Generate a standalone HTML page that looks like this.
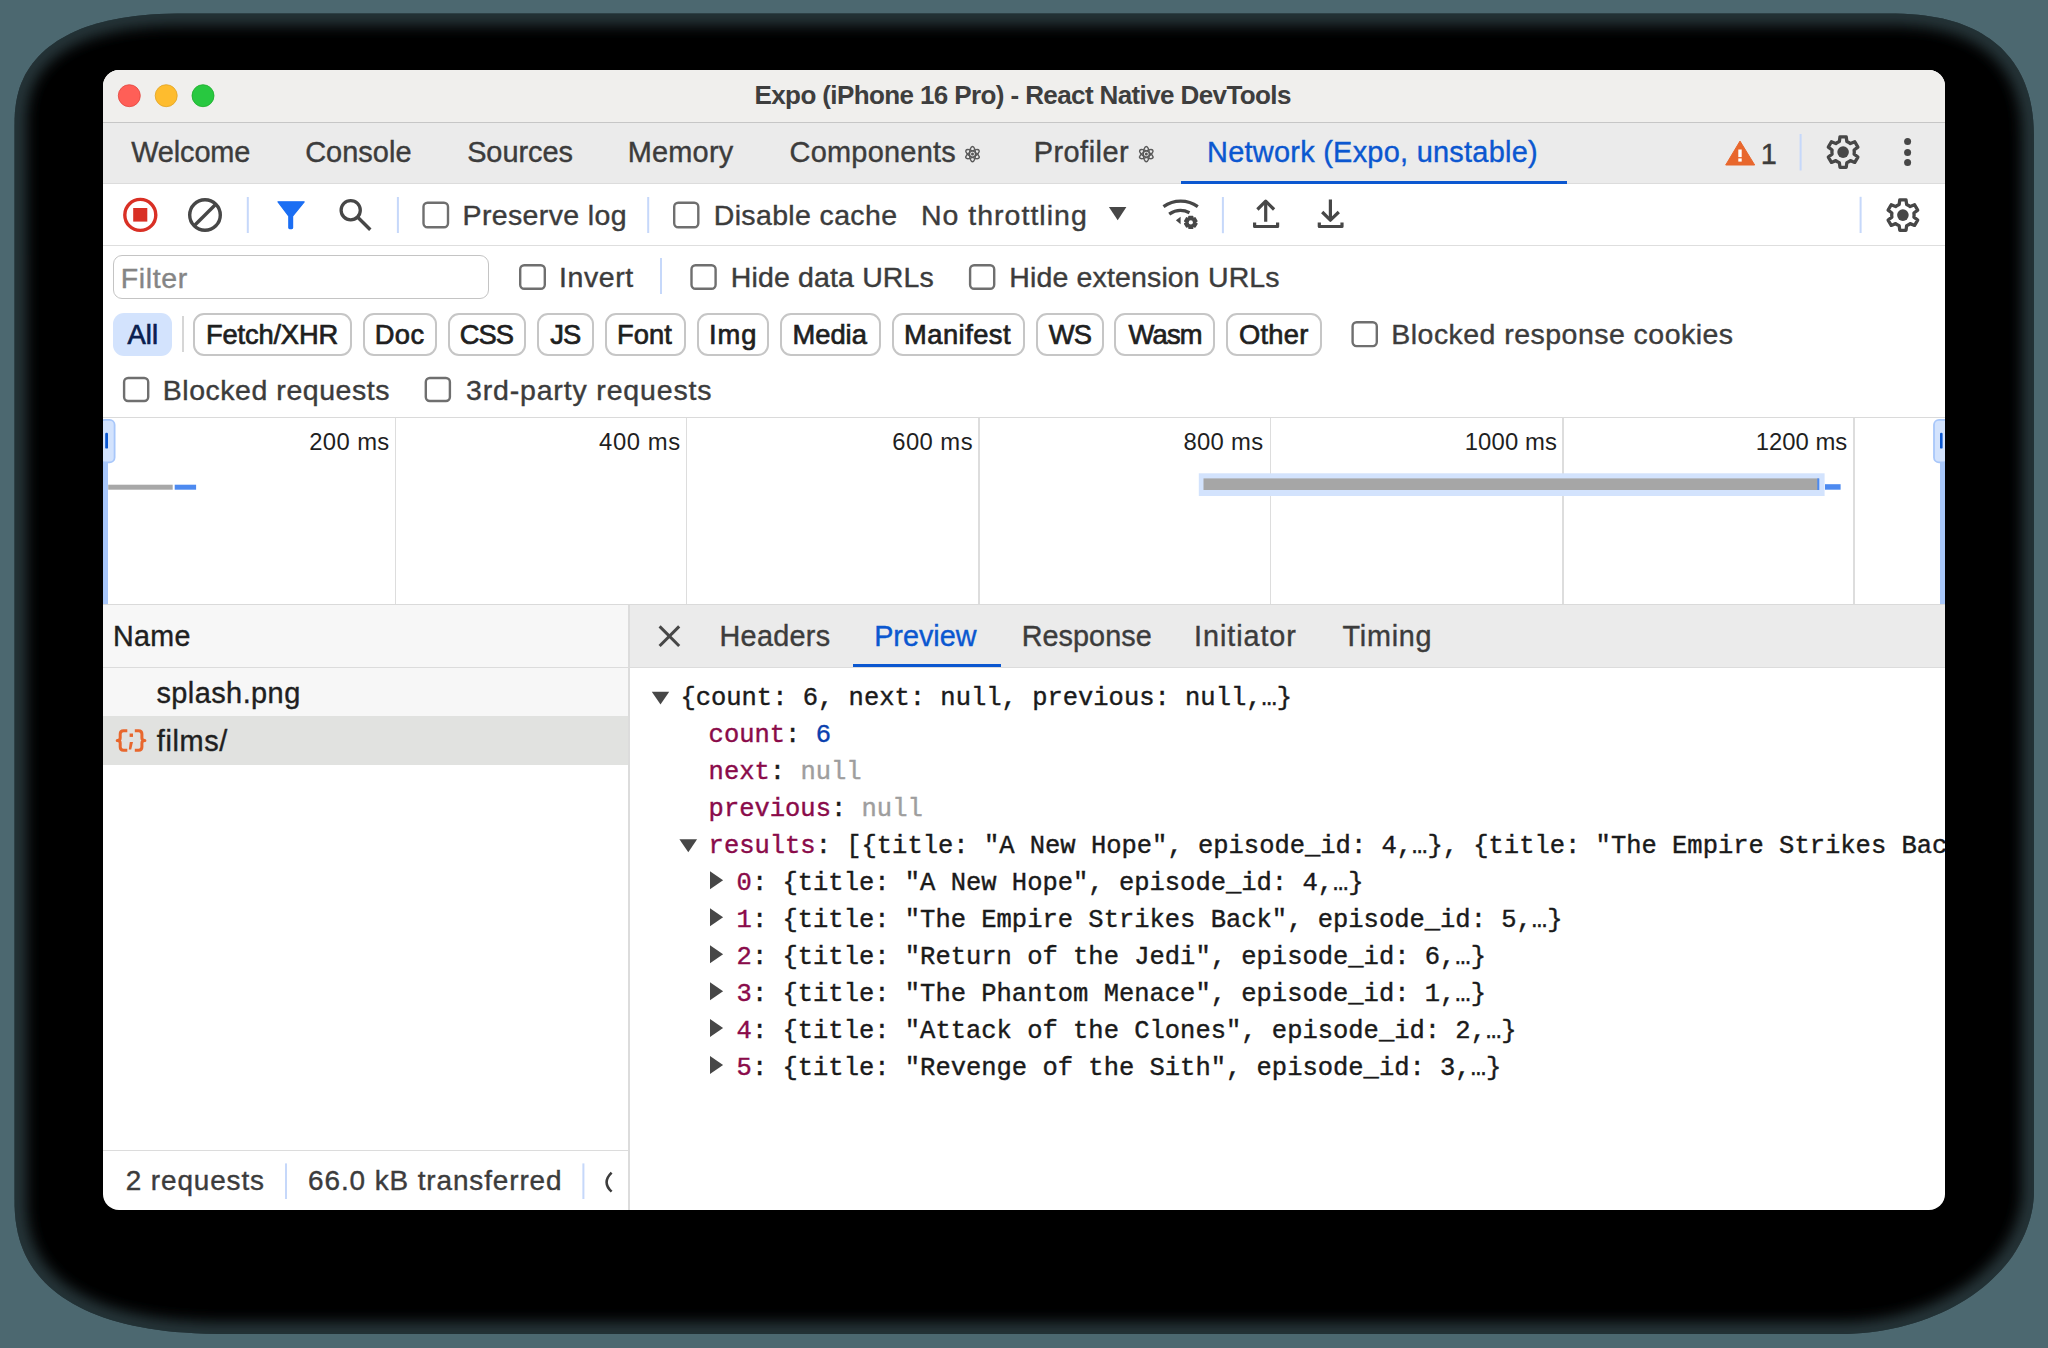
<!DOCTYPE html>
<html><head><meta charset="utf-8">
<style>
html,body{margin:0;padding:0;width:2048px;height:1348px;overflow:hidden;background:#4c6870;}
.abs{position:absolute;}
#shadow{position:absolute;left:14.5px;top:13.5px;width:2019.5px;height:1320.5px;border-radius:125px 130px 190px 170px / 115px 125px 135px 125px;background:#000;box-shadow:inset 0 0 22px 0 rgba(76,104,112,0.55);}
#win{position:absolute;left:103px;top:70px;width:1842px;height:1140px;border-radius:16px;overflow:hidden;background:#fff;}
#c{position:absolute;left:-103px;top:-70px;width:2048px;height:1348px;}
.r{position:absolute;}
.t{position:absolute;white-space:nowrap;-webkit-text-stroke:0.4px currentColor;}
.nb{-webkit-text-stroke:0;}
.t.ct{-webkit-text-stroke:0.7px currentColor;}
.m{position:absolute;white-space:nowrap;-webkit-text-stroke:0.4px currentColor;font:25.496px "Liberation Mono",monospace;}
.chip{position:absolute;top:312.5px;height:43.5px;box-sizing:border-box;border:2px solid #c6c6c6;border-radius:11px;}
.chip.sel{border:none;background:#d3e3fd;}
svg{position:absolute;left:0;top:0;}
</style></head><body>
<svg id="shsvg" width="2048" height="1348" style="position:absolute;left:0;top:0"><defs><clipPath id="shclip"><path d="M14.5,127.5 L14.6,118.9 L14.9,112.6 L15.5,106.9 L16.2,101.7 L17.2,96.7 L18.4,91.9 L19.8,87.3 L21.4,82.9 L23.3,78.7 L25.3,74.6 L27.6,70.7 L30.0,66.9 L32.7,63.2 L35.6,59.7 L38.7,56.3 L41.9,53.0 L45.4,49.8 L49.1,46.8 L53.0,43.9 L57.1,41.1 L61.4,38.5 L65.9,35.9 L70.6,33.5 L75.4,31.3 L80.5,29.1 L85.8,27.1 L91.3,25.3 L96.9,23.6 L102.8,22.0 L108.9,20.5 L115.2,19.2 L121.7,18.0 L128.5,16.9 L135.5,16.0 L142.9,15.3 L150.6,14.6 L158.8,14.1 L167.5,13.8 L177.3,13.6 L190.5,13.5 L1884.0,13.5 L1895.3,13.6 L1903.6,13.8 L1911.1,14.2 L1918.0,14.8 L1924.6,15.5 L1930.8,16.4 L1936.8,17.4 L1942.6,18.6 L1948.2,20.0 L1953.6,21.5 L1958.7,23.1 L1963.7,25.0 L1968.6,26.9 L1973.2,29.1 L1977.7,31.3 L1982.1,33.8 L1986.2,36.4 L1990.2,39.1 L1994.0,42.0 L1997.7,45.0 L2001.2,48.1 L2004.5,51.5 L2007.6,54.9 L2010.6,58.5 L2013.4,62.3 L2016.0,66.2 L2018.5,70.2 L2020.8,74.4 L2022.9,78.7 L2024.8,83.2 L2026.5,87.9 L2028.1,92.7 L2029.5,97.7 L2030.7,102.9 L2031.7,108.3 L2032.5,114.0 L2033.2,120.1 L2033.6,126.5 L2033.9,133.7 L2034.0,143.5 L2034.0,1190.0 L2033.9,1195.7 L2033.4,1201.3 L2032.7,1206.9 L2031.6,1212.5 L2030.3,1218.1 L2028.6,1223.6 L2026.7,1229.1 L2024.5,1234.5 L2022.0,1239.8 L2019.2,1245.1 L2016.2,1250.3 L2012.9,1255.4 L2009.3,1260.4 L2005.4,1265.2 L2001.3,1270.0 L1996.9,1274.6 L1992.4,1279.1 L1987.5,1283.5 L1982.5,1287.7 L1977.2,1291.8 L1971.7,1295.7 L1966.0,1299.5 L1960.1,1303.1 L1954.0,1306.5 L1947.8,1309.7 L1941.4,1312.8 L1934.8,1315.6 L1928.1,1318.3 L1921.2,1320.8 L1914.2,1323.0 L1907.1,1325.1 L1899.9,1327.0 L1892.7,1328.6 L1885.3,1330.0 L1877.8,1331.2 L1870.3,1332.2 L1862.8,1333.0 L1855.2,1333.6 L1847.6,1333.9 L1840.0,1334.0 L234.5,1334.0 L218.0,1333.9 L205.8,1333.7 L194.8,1333.2 L184.6,1332.6 L175.0,1331.9 L165.8,1330.9 L157.0,1329.8 L148.5,1328.6 L140.4,1327.1 L132.5,1325.5 L124.9,1323.8 L117.5,1321.8 L110.4,1319.7 L103.6,1317.5 L97.0,1315.1 L90.7,1312.5 L84.6,1309.7 L78.7,1306.8 L73.1,1303.8 L67.8,1300.6 L62.7,1297.2 L57.8,1293.7 L53.2,1290.0 L48.8,1286.2 L44.7,1282.2 L40.8,1278.1 L37.2,1273.8 L33.9,1269.4 L30.8,1264.8 L28.0,1260.0 L25.4,1255.1 L23.2,1249.9 L21.1,1244.6 L19.4,1239.1 L17.9,1233.3 L16.7,1227.3 L15.7,1220.9 L15.0,1214.0 L14.6,1206.4 L14.5,1196.0 Z"/></clipPath><filter id="shblur" x="-5%" y="-5%" width="110%" height="110%"><feGaussianBlur stdDeviation="7"/></filter></defs><path d="M14.5,127.5 L14.6,118.9 L14.9,112.6 L15.5,106.9 L16.2,101.7 L17.2,96.7 L18.4,91.9 L19.8,87.3 L21.4,82.9 L23.3,78.7 L25.3,74.6 L27.6,70.7 L30.0,66.9 L32.7,63.2 L35.6,59.7 L38.7,56.3 L41.9,53.0 L45.4,49.8 L49.1,46.8 L53.0,43.9 L57.1,41.1 L61.4,38.5 L65.9,35.9 L70.6,33.5 L75.4,31.3 L80.5,29.1 L85.8,27.1 L91.3,25.3 L96.9,23.6 L102.8,22.0 L108.9,20.5 L115.2,19.2 L121.7,18.0 L128.5,16.9 L135.5,16.0 L142.9,15.3 L150.6,14.6 L158.8,14.1 L167.5,13.8 L177.3,13.6 L190.5,13.5 L1884.0,13.5 L1895.3,13.6 L1903.6,13.8 L1911.1,14.2 L1918.0,14.8 L1924.6,15.5 L1930.8,16.4 L1936.8,17.4 L1942.6,18.6 L1948.2,20.0 L1953.6,21.5 L1958.7,23.1 L1963.7,25.0 L1968.6,26.9 L1973.2,29.1 L1977.7,31.3 L1982.1,33.8 L1986.2,36.4 L1990.2,39.1 L1994.0,42.0 L1997.7,45.0 L2001.2,48.1 L2004.5,51.5 L2007.6,54.9 L2010.6,58.5 L2013.4,62.3 L2016.0,66.2 L2018.5,70.2 L2020.8,74.4 L2022.9,78.7 L2024.8,83.2 L2026.5,87.9 L2028.1,92.7 L2029.5,97.7 L2030.7,102.9 L2031.7,108.3 L2032.5,114.0 L2033.2,120.1 L2033.6,126.5 L2033.9,133.7 L2034.0,143.5 L2034.0,1190.0 L2033.9,1195.7 L2033.4,1201.3 L2032.7,1206.9 L2031.6,1212.5 L2030.3,1218.1 L2028.6,1223.6 L2026.7,1229.1 L2024.5,1234.5 L2022.0,1239.8 L2019.2,1245.1 L2016.2,1250.3 L2012.9,1255.4 L2009.3,1260.4 L2005.4,1265.2 L2001.3,1270.0 L1996.9,1274.6 L1992.4,1279.1 L1987.5,1283.5 L1982.5,1287.7 L1977.2,1291.8 L1971.7,1295.7 L1966.0,1299.5 L1960.1,1303.1 L1954.0,1306.5 L1947.8,1309.7 L1941.4,1312.8 L1934.8,1315.6 L1928.1,1318.3 L1921.2,1320.8 L1914.2,1323.0 L1907.1,1325.1 L1899.9,1327.0 L1892.7,1328.6 L1885.3,1330.0 L1877.8,1331.2 L1870.3,1332.2 L1862.8,1333.0 L1855.2,1333.6 L1847.6,1333.9 L1840.0,1334.0 L234.5,1334.0 L218.0,1333.9 L205.8,1333.7 L194.8,1333.2 L184.6,1332.6 L175.0,1331.9 L165.8,1330.9 L157.0,1329.8 L148.5,1328.6 L140.4,1327.1 L132.5,1325.5 L124.9,1323.8 L117.5,1321.8 L110.4,1319.7 L103.6,1317.5 L97.0,1315.1 L90.7,1312.5 L84.6,1309.7 L78.7,1306.8 L73.1,1303.8 L67.8,1300.6 L62.7,1297.2 L57.8,1293.7 L53.2,1290.0 L48.8,1286.2 L44.7,1282.2 L40.8,1278.1 L37.2,1273.8 L33.9,1269.4 L30.8,1264.8 L28.0,1260.0 L25.4,1255.1 L23.2,1249.9 L21.1,1244.6 L19.4,1239.1 L17.9,1233.3 L16.7,1227.3 L15.7,1220.9 L15.0,1214.0 L14.6,1206.4 L14.5,1196.0 Z" fill="#000"/><g clip-path="url(#shclip)"><path d="M14.5,127.5 L14.6,118.9 L14.9,112.6 L15.5,106.9 L16.2,101.7 L17.2,96.7 L18.4,91.9 L19.8,87.3 L21.4,82.9 L23.3,78.7 L25.3,74.6 L27.6,70.7 L30.0,66.9 L32.7,63.2 L35.6,59.7 L38.7,56.3 L41.9,53.0 L45.4,49.8 L49.1,46.8 L53.0,43.9 L57.1,41.1 L61.4,38.5 L65.9,35.9 L70.6,33.5 L75.4,31.3 L80.5,29.1 L85.8,27.1 L91.3,25.3 L96.9,23.6 L102.8,22.0 L108.9,20.5 L115.2,19.2 L121.7,18.0 L128.5,16.9 L135.5,16.0 L142.9,15.3 L150.6,14.6 L158.8,14.1 L167.5,13.8 L177.3,13.6 L190.5,13.5 L1884.0,13.5 L1895.3,13.6 L1903.6,13.8 L1911.1,14.2 L1918.0,14.8 L1924.6,15.5 L1930.8,16.4 L1936.8,17.4 L1942.6,18.6 L1948.2,20.0 L1953.6,21.5 L1958.7,23.1 L1963.7,25.0 L1968.6,26.9 L1973.2,29.1 L1977.7,31.3 L1982.1,33.8 L1986.2,36.4 L1990.2,39.1 L1994.0,42.0 L1997.7,45.0 L2001.2,48.1 L2004.5,51.5 L2007.6,54.9 L2010.6,58.5 L2013.4,62.3 L2016.0,66.2 L2018.5,70.2 L2020.8,74.4 L2022.9,78.7 L2024.8,83.2 L2026.5,87.9 L2028.1,92.7 L2029.5,97.7 L2030.7,102.9 L2031.7,108.3 L2032.5,114.0 L2033.2,120.1 L2033.6,126.5 L2033.9,133.7 L2034.0,143.5 L2034.0,1190.0 L2033.9,1195.7 L2033.4,1201.3 L2032.7,1206.9 L2031.6,1212.5 L2030.3,1218.1 L2028.6,1223.6 L2026.7,1229.1 L2024.5,1234.5 L2022.0,1239.8 L2019.2,1245.1 L2016.2,1250.3 L2012.9,1255.4 L2009.3,1260.4 L2005.4,1265.2 L2001.3,1270.0 L1996.9,1274.6 L1992.4,1279.1 L1987.5,1283.5 L1982.5,1287.7 L1977.2,1291.8 L1971.7,1295.7 L1966.0,1299.5 L1960.1,1303.1 L1954.0,1306.5 L1947.8,1309.7 L1941.4,1312.8 L1934.8,1315.6 L1928.1,1318.3 L1921.2,1320.8 L1914.2,1323.0 L1907.1,1325.1 L1899.9,1327.0 L1892.7,1328.6 L1885.3,1330.0 L1877.8,1331.2 L1870.3,1332.2 L1862.8,1333.0 L1855.2,1333.6 L1847.6,1333.9 L1840.0,1334.0 L234.5,1334.0 L218.0,1333.9 L205.8,1333.7 L194.8,1333.2 L184.6,1332.6 L175.0,1331.9 L165.8,1330.9 L157.0,1329.8 L148.5,1328.6 L140.4,1327.1 L132.5,1325.5 L124.9,1323.8 L117.5,1321.8 L110.4,1319.7 L103.6,1317.5 L97.0,1315.1 L90.7,1312.5 L84.6,1309.7 L78.7,1306.8 L73.1,1303.8 L67.8,1300.6 L62.7,1297.2 L57.8,1293.7 L53.2,1290.0 L48.8,1286.2 L44.7,1282.2 L40.8,1278.1 L37.2,1273.8 L33.9,1269.4 L30.8,1264.8 L28.0,1260.0 L25.4,1255.1 L23.2,1249.9 L21.1,1244.6 L19.4,1239.1 L17.9,1233.3 L16.7,1227.3 L15.7,1220.9 L15.0,1214.0 L14.6,1206.4 L14.5,1196.0 Z" fill="none" stroke="#4c6870" stroke-opacity="0.5" stroke-width="24" filter="url(#shblur)"/></g></svg>
<div id="win"><div id="c">
<!-- backgrounds -->
<div class="r" style="left:103px;top:70px;width:1842px;height:52px;background:#f0efed"></div>
<div class="r" style="left:103px;top:122px;width:1842px;height:1px;background:#c6c6c6"></div>
<div class="r" style="left:103px;top:123px;width:1842px;height:60px;background:#ebebeb"></div>
<div class="r" style="left:103px;top:183px;width:1842px;height:1px;background:#dcdcdc"></div>
<div class="r" style="left:1181px;top:181px;width:386px;height:3px;background:#0b57d0"></div>
<div class="r" style="left:103px;top:245px;width:1842px;height:1px;background:#dedede"></div>
<div class="r" style="left:103px;top:417px;width:1842px;height:1px;background:#dadada"></div>
<div class="r" style="left:103px;top:604px;width:1842px;height:1px;background:#dadada"></div>
<div class="r" style="left:103px;top:605px;width:526px;height:62px;background:#f7f7f7"></div>
<div class="r" style="left:629px;top:605px;width:1316px;height:62px;background:#ebebeb"></div>
<div class="r" style="left:103px;top:667px;width:1842px;height:1px;background:#dcdcdc"></div>
<div class="r" style="left:103px;top:668px;width:526px;height:48px;background:#f7f7f7"></div>
<div class="r" style="left:103px;top:716px;width:526px;height:49px;background:#e1e2e0"></div>
<div class="r" style="left:628px;top:605px;width:1.5px;height:605px;background:#dcdcdc"></div>
<div class="r" style="left:103px;top:1150px;width:526px;height:1px;background:#dcdcdc"></div>
<div class="r" style="left:853px;top:664px;width:148px;height:3px;background:#0b57d0"></div>
<!-- timeline grid -->
<div class="r" style="left:394.5px;top:418px;width:1.5px;height:186px;background:#dddddd"></div>
<div class="r" style="left:685.5px;top:418px;width:1.5px;height:186px;background:#dddddd"></div>
<div class="r" style="left:978px;top:418px;width:1.5px;height:186px;background:#dddddd"></div>
<div class="r" style="left:1269.5px;top:418px;width:1.5px;height:186px;background:#dddddd"></div>
<div class="r" style="left:1562px;top:418px;width:1.5px;height:186px;background:#dddddd"></div>
<div class="r" style="left:1853px;top:418px;width:1.5px;height:186px;background:#dddddd"></div>
<!-- chips -->
<div class="chip sel" style="left:112.6px;width:59.20000000000002px"></div>
<div class="chip" style="left:193.2px;width:158.8px"></div>
<div class="chip" style="left:362.8px;width:74.19999999999999px"></div>
<div class="chip" style="left:447.8px;width:78.49999999999994px"></div>
<div class="chip" style="left:537.2px;width:56.5px"></div>
<div class="chip" style="left:604.5px;width:81.5px"></div>
<div class="chip" style="left:696.8px;width:72.20000000000005px"></div>
<div class="chip" style="left:779.9px;width:100.80000000000007px"></div>
<div class="chip" style="left:891.6px;width:133.30000000000007px"></div>
<div class="chip" style="left:1035.5px;width:68.0px"></div>
<div class="chip" style="left:1114px;width:101px"></div>
<div class="chip" style="left:1225.9px;width:96.29999999999995px"></div>
<div class="r" style="left:181.5px;top:316px;width:2px;height:36px;background:#d6d6d6"></div>
<!-- filter input -->
<div class="r" style="left:113px;top:254.5px;width:376px;height:44px;box-sizing:border-box;border:1.5px solid #c4c4c4;border-radius:9px"></div>
<svg width="2048" height="1348" viewBox="0 0 2048 1348">
<circle cx="129.3" cy="95.7" r="11" fill="#ff5f57" stroke="#e2463f" stroke-width="0.8"/>
<circle cx="166.2" cy="95.7" r="11" fill="#febc2e" stroke="#e1a325" stroke-width="0.8"/>
<circle cx="203" cy="95.7" r="11" fill="#28c840" stroke="#1dad2b" stroke-width="0.8"/>
<g fill="none" stroke="#5a5a5a" stroke-width="1.4"><ellipse cx="972.5" cy="154.1" rx="3.0" ry="7.6"/><ellipse cx="972.5" cy="154.1" rx="3.0" ry="7.6" transform="rotate(60 972.5 154.1)"/><ellipse cx="972.5" cy="154.1" rx="3.0" ry="7.6" transform="rotate(-60 972.5 154.1)"/></g><circle cx="972.5" cy="154.1" r="1.5" fill="#5a5a5a"/>
<g fill="none" stroke="#5a5a5a" stroke-width="1.4"><ellipse cx="1146.3" cy="154.1" rx="3.0" ry="7.6"/><ellipse cx="1146.3" cy="154.1" rx="3.0" ry="7.6" transform="rotate(60 1146.3 154.1)"/><ellipse cx="1146.3" cy="154.1" rx="3.0" ry="7.6" transform="rotate(-60 1146.3 154.1)"/></g><circle cx="1146.3" cy="154.1" r="1.5" fill="#5a5a5a"/>
<path d="M1740,141.1 L1754.7,165 L1725.7,165 Z" fill="#e8672d" stroke="#e8672d" stroke-width="1" stroke-linejoin="round"/>
<rect x="1738.3" y="149.5" width="3.4" height="7.6" fill="#fff"/><rect x="1738.3" y="158.4" width="3.4" height="3.2" fill="#fff"/>
<rect x="1799.60" y="134" width="2" height="36.5" fill="#c6d8fa"/>
<path d="M1837.50,142.40 L1839.36,141.54 L1840.00,136.81 L1846.20,136.81 L1846.84,141.54 L1848.70,142.40 L1850.38,143.59 L1854.79,141.77 L1857.89,147.14 L1854.11,150.06 L1854.30,152.10 L1854.11,154.14 L1857.89,157.06 L1854.79,162.43 L1850.38,160.61 L1848.70,161.80 L1846.84,162.66 L1846.20,167.39 L1840.00,167.39 L1839.36,162.66 L1837.50,161.80 L1835.82,160.61 L1831.41,162.43 L1828.31,157.06 L1832.09,154.14 L1831.90,152.10 L1832.09,150.06 L1828.31,147.14 L1831.41,141.77 L1835.82,143.59 Z" fill="none" stroke="#474747" stroke-width="3.3" stroke-linejoin="round"/><circle cx="1843.1" cy="152.1" r="5.8" fill="#474747"/>
<circle cx="1907.6" cy="141.6" r="3.5" fill="#474747"/>
<circle cx="1907.6" cy="152.4" r="3.5" fill="#474747"/>
<circle cx="1907.6" cy="162.6" r="3.5" fill="#474747"/>
<circle cx="140.3" cy="214.9" r="15.5" fill="none" stroke="#d93025" stroke-width="3.4"/>
<rect x="133.2" y="208" width="14.1" height="13.6" fill="#d93025"/>
<circle cx="205" cy="215" r="15.3" fill="none" stroke="#474747" stroke-width="3.4"/>
<line x1="215.8" y1="204.2" x2="194.2" y2="225.8" stroke="#474747" stroke-width="3.4"/>
<rect x="246.80" y="197" width="2" height="36" fill="#c6d8fa"/>
<path d="M278,201.8 L304.2,201.8 L292.6,216.2 L292.6,227.8 Q292.6,228.6 291.8,228.6 L289.6,228.6 Q288.8,228.6 288.8,227.8 L288.8,216.2 Z" fill="#1b6ef3" stroke="#1b6ef3" stroke-width="1.2" stroke-linejoin="round"/>
<circle cx="350.7" cy="210.2" r="9.6" fill="none" stroke="#474747" stroke-width="3.3"/>
<line x1="357.5" y1="217" x2="370.3" y2="229.8" stroke="#474747" stroke-width="3.4"/>
<rect x="396.90" y="197" width="2" height="36" fill="#c6d8fa"/>
<rect x="423.50" y="202.80" width="24.50" height="24.40" rx="4" fill="none" stroke="#6f6f6f" stroke-width="2.4"/>
<rect x="647.20" y="197" width="2" height="36" fill="#c6d8fa"/>
<rect x="674.20" y="202.80" width="24.10" height="24.40" rx="4" fill="none" stroke="#6f6f6f" stroke-width="2.4"/>
<path d="M1108.9,207.1 L1126.4,207.1 L1117.7,220.2 Z" fill="#474747"/>
<path d="M1163.5,206.6 A29.5,29.5 0 0 1 1197.8,206.6" fill="none" stroke="#474747" stroke-width="3.3"/>
<path d="M1169.2,214.2 A20,20 0 0 1 1189.5,212.7" fill="none" stroke="#474747" stroke-width="3.3"/>
<path d="M1175.9,220.2 L1180.6,216.8 L1180.6,224.3 Z" fill="#474747"/>
<path d="M1188.50,218.42 L1188.92,218.20 L1188.97,216.48 L1192.63,216.48 L1192.68,218.20 L1193.10,218.42 L1193.50,218.68 L1195.01,217.85 L1196.85,221.03 L1195.38,221.92 L1195.40,222.40 L1195.38,222.88 L1196.85,223.77 L1195.01,226.95 L1193.50,226.12 L1193.10,226.38 L1192.68,226.60 L1192.63,228.32 L1188.97,228.32 L1188.92,226.60 L1188.50,226.38 L1188.10,226.12 L1186.59,226.95 L1184.75,223.77 L1186.22,222.88 L1186.20,222.40 L1186.22,221.92 L1184.75,221.03 L1186.59,217.85 L1188.10,218.68 Z" fill="#474747" stroke="#474747" stroke-width="1.6" stroke-linejoin="round"/>
<circle cx="1190.8" cy="222.4" r="2.1" fill="#fff"/>
<rect x="1221.90" y="197" width="2" height="36.19999999999999" fill="#c6d8fa"/>
<g fill="none" stroke="#474747" stroke-width="3.2" stroke-linejoin="round"><line x1="1265.7" y1="202" x2="1265.7" y2="221.7"/><polyline points="1257.4,209.5 1265.7,201.2 1274.1,209.5"/><path d="M1254.6,222.4 L1254.6,226.5 L1277.6,226.5 L1277.6,222.4"/><line x1="1330.4" y1="199.5" x2="1330.4" y2="219"/><polyline points="1322.2,212 1330.4,220.2 1338.8,212"/><path d="M1319.3,222.4 L1319.3,226.5 L1342,226.5 L1342,222.4"/></g>
<rect x="1859.60" y="196.8" width="2" height="36.19999999999999" fill="#c6d8fa"/>
<path d="M1897.30,205.40 L1899.16,204.54 L1899.80,199.81 L1906.00,199.81 L1906.64,204.54 L1908.50,205.40 L1910.18,206.59 L1914.59,204.77 L1917.69,210.14 L1913.91,213.06 L1914.10,215.10 L1913.91,217.14 L1917.69,220.06 L1914.59,225.43 L1910.18,223.61 L1908.50,224.80 L1906.64,225.66 L1906.00,230.39 L1899.80,230.39 L1899.16,225.66 L1897.30,224.80 L1895.62,223.61 L1891.21,225.43 L1888.11,220.06 L1891.89,217.14 L1891.70,215.10 L1891.89,213.06 L1888.11,210.14 L1891.21,204.77 L1895.62,206.59 Z" fill="none" stroke="#474747" stroke-width="3.3" stroke-linejoin="round"/><circle cx="1902.9" cy="215.1" r="5.8" fill="#474747"/>
<rect x="520.20" y="265.20" width="24.60" height="23.60" rx="4" fill="none" stroke="#6f6f6f" stroke-width="2.4"/>
<rect x="660.00" y="258" width="2" height="36" fill="#c6d8fa"/>
<rect x="691.50" y="265.20" width="24.10" height="23.60" rx="4" fill="none" stroke="#6f6f6f" stroke-width="2.4"/>
<rect x="970.10" y="265.20" width="24.10" height="23.60" rx="4" fill="none" stroke="#6f6f6f" stroke-width="2.4"/>
<rect x="1352.60" y="322.20" width="24.20" height="23.90" rx="4" fill="none" stroke="#6f6f6f" stroke-width="2.4"/>
<rect x="124.10" y="378.00" width="24.10" height="23.00" rx="4" fill="none" stroke="#6f6f6f" stroke-width="2.4"/>
<rect x="425.80" y="378.00" width="24.10" height="23.00" rx="4" fill="none" stroke="#6f6f6f" stroke-width="2.4"/>
<rect x="100" y="419.8" width="14.6" height="42.6" rx="5" fill="#d3e3fd" stroke="#a8c7fa" stroke-width="1.8"/>
<rect x="103" y="462" width="5" height="142" fill="#a8c7fa"/>
<rect x="105.2" y="432.8" width="2.8" height="15.8" rx="1.2" fill="#0b57d0"/>
<rect x="1934" y="419.8" width="14.6" height="42.6" rx="5" fill="#d3e3fd" stroke="#a8c7fa" stroke-width="1.8"/>
<rect x="1940" y="462" width="5" height="142" fill="#a8c7fa"/>
<rect x="1940" y="432.8" width="2.6" height="15.8" rx="1.2" fill="#0b57d0"/>
<rect x="108.2" y="484.7" width="64.5" height="5" fill="#a8a8a8"/>
<rect x="174.7" y="484.7" width="21.4" height="5" fill="#4d8af0"/>
<rect x="1198.8" y="473.3" width="625.8" height="22.7" fill="#d3e3fd"/>
<rect x="1203.5" y="478.4" width="615.3" height="11.6" fill="#a6a6a6"/>
<rect x="1817.3" y="478.4" width="2" height="11.6" fill="#4d8af0"/>
<rect x="1825" y="484.2" width="15.6" height="5.5" fill="#4d8af0"/>
<g fill="none" stroke="#e8672d" stroke-width="3" stroke-linecap="butt" stroke-linejoin="round"><path d="M127.3,730.8 L123.5,730.8 Q120.2,730.8 120.2,734 L120.2,738 Q120.2,740.5 117.2,740.5 Q120.2,740.5 120.2,743 L120.2,747 Q120.2,750.2 123.5,750.2 L127.3,750.2"/><path d="M134.8,730.8 L138.6,730.8 Q141.9,730.8 141.9,734 L141.9,738 Q141.9,740.5 144.9,740.5 Q141.9,740.5 141.9,743 L141.9,747 Q141.9,750.2 138.6,750.2 L134.8,750.2"/></g>
<rect x="129.6" y="733.5" width="3.4" height="3.4" fill="#e8672d"/>
<path d="M129.8,742 L133,742 L131.2,749.5 L128.8,749.5 Z" fill="#e8672d"/>
<g stroke="#474747" stroke-width="3"><line x1="659.6" y1="626.4" x2="679.2" y2="646"/><line x1="679.2" y1="626.4" x2="659.6" y2="646"/></g>
<path d="M651.8,691.7 L669.2,691.7 L660.5,704.6 Z" fill="#474747"/>
<path d="M679.4,839.3 L697.1,839.3 L688.3,852.3 Z" fill="#474747"/>
<path d="M710,871.30 L723.1,880.30 L710,889.30 Z" fill="#474747"/>
<path d="M710,908.25 L723.1,917.25 L710,926.25 Z" fill="#474747"/>
<path d="M710,945.20 L723.1,954.20 L710,963.20 Z" fill="#474747"/>
<path d="M710,982.15 L723.1,991.15 L710,1000.15 Z" fill="#474747"/>
<path d="M710,1019.10 L723.1,1028.10 L710,1037.10 Z" fill="#474747"/>
<path d="M710,1056.05 L723.1,1065.05 L710,1074.05 Z" fill="#474747"/>
<path d="M611.6,1172.6 Q606.6,1177.5 606.6,1182.2 Q606.6,1187 611.6,1191.6" fill="none" stroke="#3c3c3c" stroke-width="2.6"/>
<rect x="285.00" y="1163.4" width="2" height="35.59999999999991" fill="#c6d8fa"/>
<rect x="582.40" y="1163.4" width="2" height="35.59999999999991" fill="#c6d8fa"/>
</svg>
<div class="t nb" style="left:754.54px;top:80.02px;font:bold 26.02px 'Liberation Sans', sans-serif;color:#3e3e3e;letter-spacing:-0.615px;">Expo (iPhone 16 Pro) - React Native DevTools</div>
<div class="t " style="left:131.25px;top:135.74px;font:normal 28.92px 'Liberation Sans', sans-serif;color:#3c3c3c;letter-spacing:-0.137px;">Welcome</div>
<div class="t " style="left:305.15px;top:135.74px;font:normal 28.92px 'Liberation Sans', sans-serif;color:#3c3c3c;letter-spacing:0.062px;">Console</div>
<div class="t " style="left:467.14px;top:135.74px;font:normal 28.92px 'Liberation Sans', sans-serif;color:#3c3c3c;letter-spacing:-0.031px;">Sources</div>
<div class="t " style="left:627.69px;top:135.74px;font:normal 28.92px 'Liberation Sans', sans-serif;color:#3c3c3c;letter-spacing:0.232px;">Memory</div>
<div class="t " style="left:789.55px;top:135.74px;font:normal 28.92px 'Liberation Sans', sans-serif;color:#3c3c3c;letter-spacing:0.257px;">Components</div>
<div class="t " style="left:1033.69px;top:135.74px;font:normal 28.92px 'Liberation Sans', sans-serif;color:#3c3c3c;letter-spacing:0.482px;">Profiler</div>
<div class="t " style="left:1206.99px;top:135.74px;font:normal 28.92px 'Liberation Sans', sans-serif;color:#0b57d0;letter-spacing:0.270px;">Network (Expo, unstable)</div>
<div class="t " style="left:1760.86px;top:137.74px;font:normal 28.92px 'Liberation Sans', sans-serif;color:#3c3c3c;letter-spacing:0.000px;">1</div>
<div class="t " style="left:462.52px;top:198.75px;font:normal 28.49px 'Liberation Sans', sans-serif;color:#3c3c3c;letter-spacing:0.377px;">Preserve log</div>
<div class="t " style="left:713.72px;top:198.75px;font:normal 28.49px 'Liberation Sans', sans-serif;color:#3c3c3c;letter-spacing:0.364px;">Disable cache</div>
<div class="t " style="left:920.92px;top:198.75px;font:normal 28.49px 'Liberation Sans', sans-serif;color:#3c3c3c;letter-spacing:1.023px;">No throttling</div>
<div class="t " style="left:120.72px;top:262.35px;font:normal 28.49px 'Liberation Sans', sans-serif;color:#858585;letter-spacing:0.649px;">Filter</div>
<div class="t " style="left:558.94px;top:260.75px;font:normal 28.49px 'Liberation Sans', sans-serif;color:#3c3c3c;letter-spacing:0.611px;">Invert</div>
<div class="t " style="left:730.72px;top:260.75px;font:normal 28.49px 'Liberation Sans', sans-serif;color:#3c3c3c;letter-spacing:0.156px;">Hide data URLs</div>
<div class="t " style="left:1009.32px;top:260.75px;font:normal 28.49px 'Liberation Sans', sans-serif;color:#3c3c3c;letter-spacing:0.151px;">Hide extension URLs</div>
<div class="t ct" style="left:127.40px;top:319.32px;font:normal 27.33px 'Liberation Sans', sans-serif;color:#0a1f4f;letter-spacing:0.216px;">All</div>
<div class="t ct" style="left:206.11px;top:319.32px;font:normal 27.33px 'Liberation Sans', sans-serif;color:#1f1f1f;letter-spacing:-0.198px;">Fetch/XHR</div>
<div class="t ct" style="left:374.71px;top:319.32px;font:normal 27.33px 'Liberation Sans', sans-serif;color:#1f1f1f;letter-spacing:0.419px;">Doc</div>
<div class="t ct" style="left:459.78px;top:319.32px;font:normal 27.33px 'Liberation Sans', sans-serif;color:#1f1f1f;letter-spacing:-1.000px;">CSS</div>
<div class="t ct" style="left:550.32px;top:319.32px;font:normal 27.33px 'Liberation Sans', sans-serif;color:#1f1f1f;letter-spacing:-1.000px;">JS</div>
<div class="t ct" style="left:617.01px;top:319.32px;font:normal 27.33px 'Liberation Sans', sans-serif;color:#1f1f1f;letter-spacing:0.050px;">Font</div>
<div class="t ct" style="left:709.04px;top:319.32px;font:normal 27.33px 'Liberation Sans', sans-serif;color:#1f1f1f;letter-spacing:0.921px;">Img</div>
<div class="t ct" style="left:792.41px;top:319.32px;font:normal 27.33px 'Liberation Sans', sans-serif;color:#1f1f1f;letter-spacing:0.014px;">Media</div>
<div class="t ct" style="left:904.11px;top:319.32px;font:normal 27.33px 'Liberation Sans', sans-serif;color:#1f1f1f;letter-spacing:0.451px;">Manifest</div>
<div class="t ct" style="left:1048.85px;top:319.32px;font:normal 27.33px 'Liberation Sans', sans-serif;color:#1f1f1f;letter-spacing:-1.000px;">WS</div>
<div class="t ct" style="left:1128.50px;top:319.32px;font:normal 27.33px 'Liberation Sans', sans-serif;color:#1f1f1f;letter-spacing:-0.759px;">Wasm</div>
<div class="t ct" style="left:1239.11px;top:319.32px;font:normal 27.33px 'Liberation Sans', sans-serif;color:#1f1f1f;letter-spacing:0.202px;">Other</div>
<div class="t " style="left:1391.32px;top:318.45px;font:normal 28.49px 'Liberation Sans', sans-serif;color:#3c3c3c;letter-spacing:0.468px;">Blocked response cookies</div>
<div class="t " style="left:162.72px;top:374.35px;font:normal 28.49px 'Liberation Sans', sans-serif;color:#3c3c3c;letter-spacing:0.547px;">Blocked requests</div>
<div class="t " style="left:465.95px;top:374.35px;font:normal 28.49px 'Liberation Sans', sans-serif;color:#3c3c3c;letter-spacing:0.849px;">3rd-party requests</div>
<div class="t nb" style="left:309.21px;top:428.03px;font:normal 23.84px 'Liberation Sans', sans-serif;color:#1f1f1f;letter-spacing:0.388px;">200 ms</div>
<div class="t nb" style="left:599.12px;top:428.03px;font:normal 23.84px 'Liberation Sans', sans-serif;color:#1f1f1f;letter-spacing:0.585px;">400 ms</div>
<div class="t nb" style="left:892.21px;top:428.03px;font:normal 23.84px 'Liberation Sans', sans-serif;color:#1f1f1f;letter-spacing:0.448px;">600 ms</div>
<div class="t nb" style="left:1183.45px;top:428.03px;font:normal 23.84px 'Liberation Sans', sans-serif;color:#1f1f1f;letter-spacing:0.320px;">800 ms</div>
<div class="t nb" style="left:1464.73px;top:428.03px;font:normal 23.84px 'Liberation Sans', sans-serif;color:#1f1f1f;letter-spacing:0.143px;">1000 ms</div>
<div class="t nb" style="left:1755.73px;top:428.03px;font:normal 23.84px 'Liberation Sans', sans-serif;color:#1f1f1f;letter-spacing:0.010px;">1200 ms</div>
<div class="t " style="left:112.91px;top:619.91px;font:normal 28.63px 'Liberation Sans', sans-serif;color:#1f1f1f;letter-spacing:0.382px;">Name</div>
<div class="t " style="left:156.42px;top:676.74px;font:normal 28.92px 'Liberation Sans', sans-serif;color:#1f1f1f;letter-spacing:0.444px;">splash.png</div>
<div class="t " style="left:156.71px;top:724.94px;font:normal 28.92px 'Liberation Sans', sans-serif;color:#1f1f1f;letter-spacing:0.649px;">films/</div>
<div class="t " style="left:719.50px;top:619.88px;font:normal 28.78px 'Liberation Sans', sans-serif;color:#3c3c3c;letter-spacing:0.314px;">Headers</div>
<div class="t " style="left:874.20px;top:619.88px;font:normal 28.78px 'Liberation Sans', sans-serif;color:#0b57d0;letter-spacing:-0.013px;">Preview</div>
<div class="t " style="left:1021.70px;top:619.88px;font:normal 28.78px 'Liberation Sans', sans-serif;color:#3c3c3c;letter-spacing:0.065px;">Response</div>
<div class="t " style="left:1194.11px;top:619.88px;font:normal 28.78px 'Liberation Sans', sans-serif;color:#3c3c3c;letter-spacing:0.924px;">Initiator</div>
<div class="t " style="left:1342.62px;top:619.88px;font:normal 28.78px 'Liberation Sans', sans-serif;color:#3c3c3c;letter-spacing:0.742px;">Timing</div>
<div class="t " style="left:125.80px;top:1165.48px;font:normal 27.91px 'Liberation Sans', sans-serif;color:#3c3c3c;letter-spacing:0.880px;">2 requests</div>
<div class="t " style="left:308.10px;top:1165.48px;font:normal 27.91px 'Liberation Sans', sans-serif;color:#3c3c3c;letter-spacing:0.896px;">66.0 kB transferred</div>
<div style="position:absolute;left:629px;top:668px;width:1316px;height:542px;overflow:hidden"><div style="position:absolute;left:-629px;top:-668px;width:2048px;height:1348px">
<div class="m" style="left:680.40px;top:684.05px"><span style="color:#1a1a1a">{count: 6, next: null, previous: null,…}</span></div>
<div class="m" style="left:708.60px;top:721.00px"><span style="color:#8a0b4a">count</span><span style="color:#1a1a1a">: </span><span style="color:#0a3fae">6</span></div>
<div class="m" style="left:708.60px;top:757.95px"><span style="color:#8a0b4a">next</span><span style="color:#1a1a1a">: </span><span style="color:#9e9e9e">null</span></div>
<div class="m" style="left:708.60px;top:794.90px"><span style="color:#8a0b4a">previous</span><span style="color:#1a1a1a">: </span><span style="color:#9e9e9e">null</span></div>
<div class="m" style="left:708.60px;top:831.85px"><span style="color:#8a0b4a">results</span><span style="color:#1a1a1a">: [{title: &quot;A New Hope&quot;, episode_id: 4,…}, {title: &quot;The Empire Strikes Back&quot;, episode_id: 5,…},…]</span></div>
<div class="m" style="left:736.60px;top:868.80px"><span style="color:#8a0b4a">0</span><span style="color:#1a1a1a">: {title: &quot;A New Hope&quot;, episode_id: 4,…}</span></div>
<div class="m" style="left:736.60px;top:905.75px"><span style="color:#8a0b4a">1</span><span style="color:#1a1a1a">: {title: &quot;The Empire Strikes Back&quot;, episode_id: 5,…}</span></div>
<div class="m" style="left:736.60px;top:942.70px"><span style="color:#8a0b4a">2</span><span style="color:#1a1a1a">: {title: &quot;Return of the Jedi&quot;, episode_id: 6,…}</span></div>
<div class="m" style="left:736.60px;top:979.65px"><span style="color:#8a0b4a">3</span><span style="color:#1a1a1a">: {title: &quot;The Phantom Menace&quot;, episode_id: 1,…}</span></div>
<div class="m" style="left:736.60px;top:1016.60px"><span style="color:#8a0b4a">4</span><span style="color:#1a1a1a">: {title: &quot;Attack of the Clones&quot;, episode_id: 2,…}</span></div>
<div class="m" style="left:736.60px;top:1053.55px"><span style="color:#8a0b4a">5</span><span style="color:#1a1a1a">: {title: &quot;Revenge of the Sith&quot;, episode_id: 3,…}</span></div>
</div></div>
</div></div>
</body></html>
